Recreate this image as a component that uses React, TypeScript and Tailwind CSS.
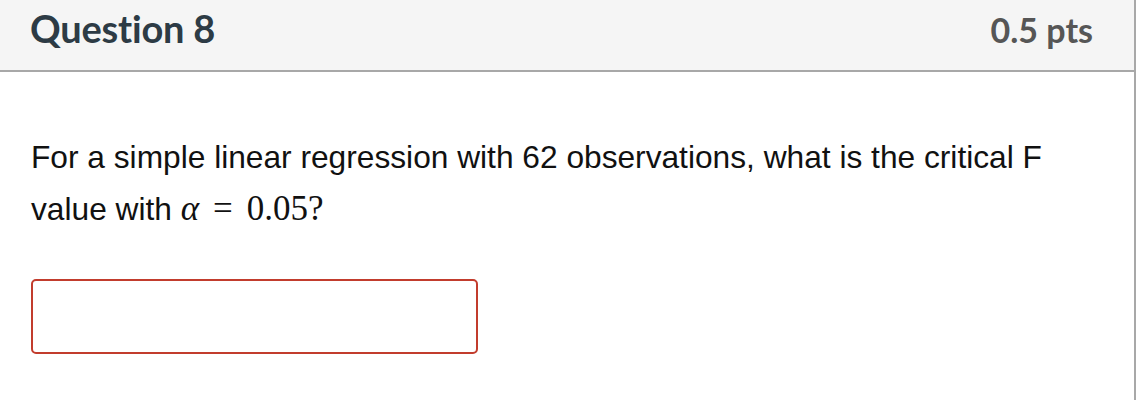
export default function App() {
  return (
    <div className="w-[1142px] h-[400px] bg-white overflow-hidden">
      <div className="w-[1136px] h-[400px] border-r-2 border-[#a8a8a8]">
        {/* Header */}
        <div className="h-[72px] bg-[#f5f5f5] border-b-2 border-[#a8a8a8] flex items-center justify-between pl-[30px] pr-[41px]">
          <h2
            className="text-[38px] font-bold text-[#2d3b45] tracking-[-0.2px] pb-[14px]"
            style={{ fontFamily: 'Lato, sans-serif' }}
          >
            Question 8
          </h2>
          <span
            className="text-[34px] font-bold text-[#565656] pb-[12px]"
            style={{ fontFamily: 'Lato, sans-serif' }}
          >
            0.5 pts
          </span>
        </div>

        {/* Body */}
        <div className="pl-[31px] pt-[60px]">
          <p
            className="text-[31.7px] leading-[51px] text-[#111]"
            style={{ fontFamily: '"Liberation Sans", Arial, sans-serif' }}
          >
            For a simple linear regression with 62 observations, what is the critical F
            <br />
            value with{' '}
            <span
              className="text-[35px]"
              style={{ fontFamily: '"Liberation Serif", "DejaVu Serif", serif' }}
            >
              <i>α</i>
              <span className="mx-[14px]">=</span>
              0.05?
            </span>
          </p>
          <div className="mt-[44px] w-[447px] h-[75px] border-2 border-[#c23c2d] rounded-[5px]" />
        </div>
      </div>
    </div>
  );
}
